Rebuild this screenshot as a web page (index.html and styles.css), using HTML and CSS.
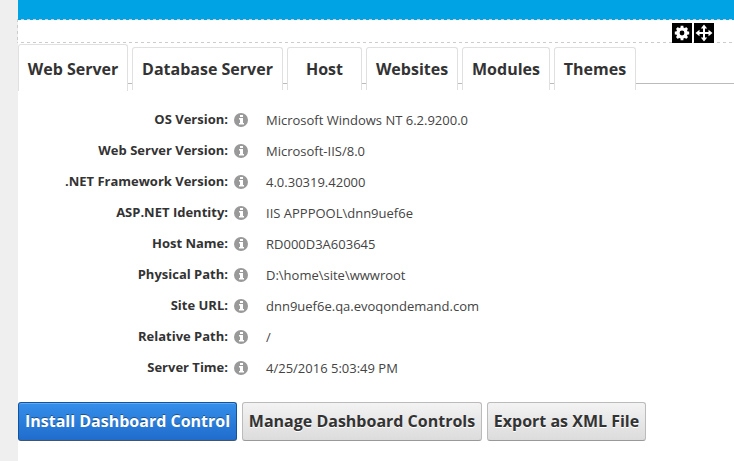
FILE: index.html
```html
<!DOCTYPE html>
<html lang="en"><head><meta charset="utf-8"><title>Dashboard</title><link rel="stylesheet" href="styles.css"></head>
<body>
<svg class="defs" width="0" height="0"><symbol id="info" viewBox="0 0 14 14"><circle cx="7" cy="7" r="7" fill="#999"/><path d="M6 2h3v2H6zM5 5h4v5h1v1.500H5V10h1V6.500H5z" fill="#fff"/></symbol></svg>
<main class="page">
<div class="banner"></div>
<div class="module-bar"><div class="actions">
<span class="action"><svg viewBox="0 0 20 20"><circle cx="10" cy="10" r="4.100" fill="none" stroke="#fff" stroke-width="3.400"/><path d="M10 2.800v2.500M10 14.700v2.500M2.800 10h2.500M14.700 10h2.500M4.900 4.900l1.800 1.800M13.300 13.300l1.800 1.800M15.100 4.900l-1.800 1.800M4.900 15.100l1.800-1.800" stroke="#fff" stroke-width="2.800"/></svg></span>
<span class="action"><svg viewBox="0 0 20 20"><path d="M10 4v12M4 10h12" stroke="#fff" stroke-width="2"/><path d="M10 1.500l3.200 4H6.800zM10 18.500l3.200-4H6.800zM1.500 10l4-3.200v6.400zM18.500 10l-4-3.200v6.400z" fill="#fff"/></svg></span>
</div></div>
<nav class="tabs"><a class="tab active w1">Web Server</a><a class="tab w2">Database Server</a><a class="tab w3">Host</a><a class="tab w4">Websites</a><a class="tab w5">Modules</a><a class="tab w6">Themes</a></nav>
<dl class="info">
<div class="row"><dt>OS Version:</dt><svg class="help"><use href="#info"/></svg><dd>Microsoft Windows NT 6.2.9200.0</dd></div>
<div class="row"><dt>Web Server Version:</dt><svg class="help"><use href="#info"/></svg><dd>Microsoft-IIS/8.0</dd></div>
<div class="row"><dt>.NET Framework Version:</dt><svg class="help"><use href="#info"/></svg><dd>4.0.30319.42000</dd></div>
<div class="row"><dt>ASP.NET Identity:</dt><svg class="help"><use href="#info"/></svg><dd>IIS APPPOOL\dnn9uef6e</dd></div>
<div class="row"><dt>Host Name:</dt><svg class="help"><use href="#info"/></svg><dd>RD000D3A603645</dd></div>
<div class="row"><dt>Physical Path:</dt><svg class="help"><use href="#info"/></svg><dd>D:\home\site\wwwroot</dd></div>
<div class="row"><dt>Site URL:</dt><svg class="help"><use href="#info"/></svg><dd>dnn9uef6e.qa.evoqondemand.com</dd></div>
<div class="row"><dt>Relative Path:</dt><svg class="help"><use href="#info"/></svg><dd>/</dd></div>
<div class="row"><dt>Server Time:</dt><svg class="help"><use href="#info"/></svg><dd>4/25/2016 5:03:49 PM</dd></div>
</dl>
<div class="buttons"><a class="btn primary b1">Install Dashboard Control</a><a class="btn b2">Manage Dashboard Controls</a><a class="btn b3">Export as XML File</a></div>
</main></body></html>
```
FILE: styles.css
```css
*{box-sizing:border-box}
body{margin:0;background:#efefef;font-family:"Open Sans",sans-serif;color:#333;overflow:hidden}
.defs{display:none}
.page{margin-left:18px;height:461px;background:#fff}
.banner{height:19px;background:#00a4e4}
.module-bar{height:24px;margin-left:-1px;padding:4px 20px 0 0;background:
 linear-gradient(90deg,#ccc 50%,transparent 50%) 4px 0/6px 1px repeat-x,
 linear-gradient(90deg,#ccc 50%,transparent 50%) 4px 23px/6px 1px repeat-x,
 linear-gradient(#ccc 50%,transparent 50%) 0 0/1px 6px repeat-y,
 linear-gradient(#00a4e4,#00a4e4) 1px 0/100% 1px no-repeat}
.actions{display:flex;gap:2px;justify-content:flex-end}
.action{width:20px;height:20px;background:#000}
.action svg{display:block}
.tabs{display:flex;gap:4px;height:48px;align-items:flex-start;padding-top:1px;background:linear-gradient(#bbb,#bbb) 0 40px/100% 1px no-repeat}
.tab{margin-top:3px;height:43px;border:1px solid #e0e0e0;border-bottom:0;border-radius:3px 3px 0 0;background:linear-gradient(#bbb,#bbb) 0 100%/0 0 no-repeat #fff;font-weight:700;font-size:16px;line-height:42px;text-align:center;white-space:nowrap}
.tab.active{margin-top:0;height:47px;line-height:49px}
.w1{width:110px}.w2{width:151px}.w3{width:75px}.w4{width:92px}.w5{width:88px}.w6{width:82px}
.info{margin:13px 0 0}
.row{height:31px;display:flex;align-items:flex-start}
dt{width:210px;text-align:right;font-weight:700;font-size:13px;line-height:31px}
.help{width:14px;height:14px;margin:9px 0 0 6px}
dd{margin:0 0 0 18px;font-size:13px;line-height:33px;color:#444}
.buttons{display:flex;gap:5px;margin-top:19px}
.btn{height:39px;border:1px solid #bbb;border-bottom-color:#999;border-radius:3px;background:linear-gradient(#f3f3f3,#dcdcdc);font-weight:700;font-size:16px;line-height:37px;text-align:center;white-space:nowrap;text-shadow:0 1px #fff}
.primary{color:#fff;background:linear-gradient(#358fea,#206ccc);border-color:#12539e;border-bottom-color:#456;box-shadow:inset 0 1px #62a9ef;text-shadow:0 -1px rgba(0,0,0,.4)}
.b1{width:219px}.b2{width:240px}.b3{width:159px}
```
